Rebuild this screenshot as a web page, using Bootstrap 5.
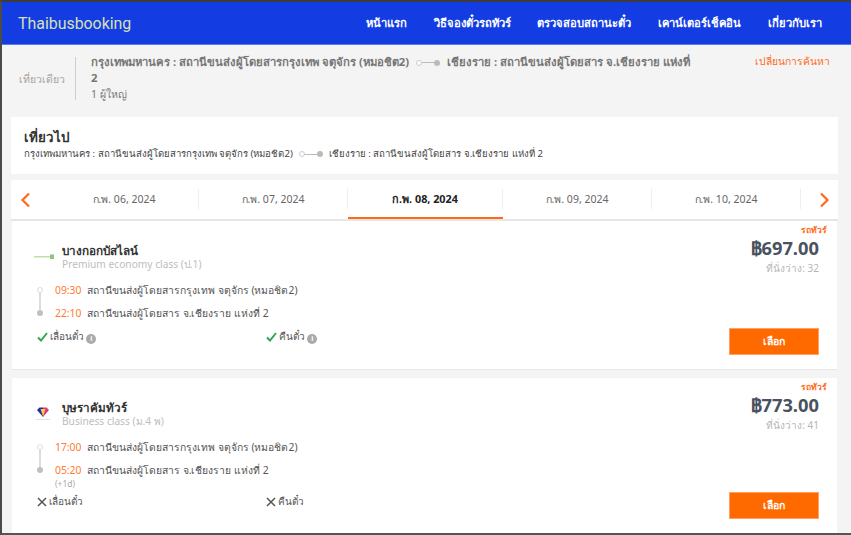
<!DOCTYPE html>
<html lang="th">
<head>
<meta charset="utf-8">
<title>Thaibusbooking</title>
<link href="https://cdn.jsdelivr.net/npm/bootstrap@5.3.0/dist/css/bootstrap.min.css" rel="stylesheet">
<style>
html,body{height:535px;overflow:hidden;}
body{background:#f4f4f4;font-family:"Noto Sans","Open Sans","Liberation Sans",sans-serif;font-size:10.5px;color:#555;}
.app-frame{height:535px;overflow:hidden;border-top:2px solid #3c3c3c;border-left:2px solid #4a4a4a;border-bottom:2px solid #555;background:#f4f4f4;}
.top-bar{height:43px;background:#133de2;padding:0 29px 0 16px;border-bottom:1px solid #5a7be8;}
.brand-name{font-family:"Roboto","Liberation Sans",sans-serif;font-size:15.9px;color:#d8e0b4;padding-top:1px;}
.top-link{font-size:11.2px;font-weight:700;color:#fff;text-decoration:none;}
.top-links{gap:26.8px;}
.sum-box{height:72px;padding:7px 17px 0 17px;}
.sum-kind{width:56px;color:#a9a39c;font-size:10.5px;height:43px;margin-top:6px;}
.sum-rule{width:1px;height:43px;background:#ccc;margin:5px 15px 0 0;flex:none;}
.sum-main{width:604px;line-height:16px;color:#777;font-size:11.3px;margin-top:2px;}
.sum-route{font-weight:700;}
.sum-count{font-size:10.5px;}
.sum-change{color:#ff6a1a;font-size:10.3px;text-decoration:none;margin-left:auto;margin-right:4px;margin-top:1px;line-height:16px;}
.go-box{background:#fff;margin:0 13px 0 9px;height:57px;padding:12px 13px;}
.go-title{font-size:13.4px;font-weight:700;color:#333;line-height:17px;}
.go-route{font-size:9.6px;color:#444;line-height:13px;margin-top:1px;}
.line-mark{display:inline-flex;align-items:center;vertical-align:middle;margin:0 7px;}
.go-route .line-mark{margin:0 6px;}
.dot-open{width:6px;height:6px;border:1px solid #ccc;border-radius:50%;background:#fff;flex:none;}
.dot-full{width:6px;height:6px;border-radius:50%;background:#bbb;flex:none;}
.dash-h{width:12px;height:1px;background:#bbb;}
.date-strip{background:#fff;margin:6px 13px 0 9px;height:41px;border-bottom:2px solid #e6e6e6;}
.arrow-prev{width:29px;flex:none;}
.arrow-next{width:27px;flex:none;}
.date-cell{width:149px;text-align:center;font-size:10.5px;color:#666;height:39px;padding-top:5px;}
.date-cell-wrap{height:20px;line-height:20px;border-right:1px solid #eee;margin-top:4px;}
.date-cell.is-on{width:155px;color:#222;font-weight:700;font-size:10.8px;border-bottom:2px solid #ff6a13;}
.trip-card{background:#fff;margin:0 14px 0 10px;border-bottom:1px solid #e6e6e6;position:relative;padding:0 18px 0 20px;}
.trip-one{height:149px;margin-bottom:8px;}
.trip-two{height:156px;}
.tour-tag{position:absolute;right:10px;top:3px;font-size:8.5px;font-weight:700;color:#ff6a1a;line-height:11px;}
.logo-cell{width:30px;flex:none;padding-left:2px;}
.logo-cell svg{display:block;}
.op-head{padding-top:22px;margin-bottom:11px;}
.op-name{font-size:11.7px;font-weight:700;color:#333;line-height:14px;}
.op-class{font-size:10.2px;color:#bdbdbd;line-height:14px;}
.price-col{padding-top:15px;}
.price-val{font-family:"Open Sans","Noto Sans",sans-serif;font-size:18.3px;font-weight:700;color:#49525e;line-height:24px;}
.seat-left{font-size:10px;color:#b5b5b5;line-height:13px;margin-top:2px;}
.time-row{line-height:16px;font-size:10.35px;color:#555;height:16px;}
.time-row+.time-row{margin-top:7px;}
.time-val{color:#ff7a33;width:32px;flex:none;}
.rail{width:6px;flex:none;margin:0 4px 0 5px;padding-top:5px;}
.rail-line{width:2px;height:17px;background:#ddd;}
.rail .dot-open{border:1.5px solid #ddd;}
.rail .dot-full{background:#bfbfbf;}
.day-plus{font-size:8.5px;color:#aaa;line-height:9px;padding-left:23px;margin-top:1px;}
.perk-row{margin:8px 0 0 5px;}
.perk-row-two{margin-top:6px;}
.perk{width:229px;font-size:10px;color:#555;line-height:14px;}
.perk svg{margin-right:-1px;}
.info-dot{display:inline-flex;width:10px;height:10px;border-radius:50%;background:#aaa;color:#fff;font-size:7px;font-weight:700;align-items:center;justify-content:center;vertical-align:-1px;}
.pick-btn{background:#ff6a00;border:1px solid #ffa165;color:#fff;border-radius:0;width:90px;height:27px;font-size:10.5px;font-weight:700;padding:0;line-height:25px;margin-bottom:14px;}
.pick-btn:hover{background:#ff6a00;color:#fff;}
</style>
</head>
<body>
<div class="app-frame d-flex flex-column">
  <nav class="top-bar d-flex align-items-center justify-content-between flex-shrink-0">
    <span class="brand-name">Thaibusbooking</span>
    <div class="top-links d-flex align-items-center">
      <a class="top-link" href="#">หน้าแรก</a>
      <a class="top-link" href="#">วิธีจองตั๋วรถทัวร์</a>
      <a class="top-link" href="#">ตรวจสอบสถานะตั๋ว</a>
      <a class="top-link" href="#">เคาน์เตอร์เช็คอิน</a>
      <a class="top-link" href="#">เกี่ยวกับเรา</a>
    </div>
  </nav>

  <section class="sum-box d-flex flex-shrink-0">
    <div class="sum-kind d-flex align-items-center">เที่ยวเดียว</div>
    <div class="sum-rule"></div>
    <div class="sum-main">
      <div class="sum-route">กรุงเทพมหานคร : สถานีขนส่งผู้โดยสารกรุงเทพ จตุจักร (หมอชิต2)<span class="line-mark"><span class="dot-open"></span><span class="dash-h"></span><span class="dot-full"></span></span>เชียงราย : สถานีขนส่งผู้โดยสาร จ.เชียงราย แห่งที่ 2</div>
      <div class="sum-count">1 ผู้ใหญ่</div>
    </div>
    <a class="sum-change" href="#">เปลี่ยนการค้นหา</a>
  </section>

  <section class="go-box flex-shrink-0">
    <div class="go-title">เที่ยวไป</div>
    <div class="go-route">กรุงเทพมหานคร : สถานีขนส่งผู้โดยสารกรุงเทพ จตุจักร (หมอชิต2)<span class="line-mark"><span class="dot-open"></span><span class="dash-h"></span><span class="dot-full"></span></span>เชียงราย : สถานีขนส่งผู้โดยสาร จ.เชียงราย แห่งที่ 2</div>
  </section>

  <section class="date-strip d-flex flex-shrink-0">
    <div class="arrow-prev d-flex align-items-center justify-content-center">
      <svg width="11" height="16" viewBox="0 0 11 16"><path d="M9 1.500 2.500 8 9 14.500" fill="none" stroke="#ff6a1a" stroke-width="2.200"/></svg>
    </div>
    <div class="d-flex flex-grow-1 justify-content-center">
      <div class="date-cell"><div class="date-cell-wrap">ก.พ. 06, 2024</div></div>
      <div class="date-cell"><div class="date-cell-wrap">ก.พ. 07, 2024</div></div>
      <div class="date-cell is-on"><div class="date-cell-wrap">ก.พ. 08, 2024</div></div>
      <div class="date-cell"><div class="date-cell-wrap">ก.พ. 09, 2024</div></div>
      <div class="date-cell"><div class="date-cell-wrap">ก.พ. 10, 2024</div></div>
    </div>
    <div class="arrow-next d-flex align-items-center justify-content-center">
      <svg width="11" height="16" viewBox="0 0 11 16"><path d="M2 1.500 8.500 8 2 14.500" fill="none" stroke="#ff6a1a" stroke-width="2.200"/></svg>
    </div>
  </section>

  <article class="trip-card trip-one d-flex flex-shrink-0">
    <span class="tour-tag">รถทัวร์</span>
    <div class="flex-grow-1">
      <div class="op-head d-flex align-items-center">
        <div class="logo-cell">
          <svg width="21" height="8" viewBox="0 0 21 8"><rect x="0" y="3" width="16" height="1.500" fill="#c3dfa8"/><rect x="16" y="1.500" width="4" height="4.500" fill="#8cc57f"/></svg>
        </div>
        <div>
          <div class="op-name">บางกอกบัสไลน์</div>
          <div class="op-class">Premium economy class (ป.1)</div>
        </div>
      </div>
      <div class="d-flex">
        <div class="rail d-flex flex-column align-items-center">
          <span class="dot-open"></span><span class="rail-line"></span><span class="dot-full"></span>
        </div>
        <div class="ps-2">
          <div class="time-row d-flex"><span class="time-val">09:30</span><span>สถานีขนส่งผู้โดยสารกรุงเทพ จตุจักร (หมอชิต2)</span></div>
          <div class="time-row d-flex"><span class="time-val">22:10</span><span>สถานีขนส่งผู้โดยสาร จ.เชียงราย แห่งที่ 2</span></div>
        </div>
      </div>
      <div class="perk-row d-flex">
        <div class="perk"><svg width="11" height="10" viewBox="0 0 11 10"><path d="M1 5.500 4 8.500 10 1" fill="none" stroke="#2ea84f" stroke-width="2"/></svg> เลื่อนตั๋ว <span class="info-dot">i</span></div>
        <div class="perk"><svg width="11" height="10" viewBox="0 0 11 10"><path d="M1 5.500 4 8.500 10 1" fill="none" stroke="#2ea84f" stroke-width="2"/></svg> คืนตั๋ว <span class="info-dot">i</span></div>
      </div>
    </div>
    <div class="price-col d-flex flex-column align-items-end">
      <div class="price-val">฿697.00</div>
      <div class="seat-left">ที่นั่งว่าง: 32</div>
      <button class="btn pick-btn mt-auto" type="button">เลือก</button>
    </div>
  </article>

  <article class="trip-card trip-two d-flex flex-shrink-0">
    <span class="tour-tag">รถทัวร์</span>
    <div class="flex-grow-1">
      <div class="op-head d-flex align-items-center">
        <div class="logo-cell">
          <svg width="18" height="16" viewBox="0 0 18 16"><path d="M3 4 5.500 1.500H9V11z" fill="#2a2a9c"/><path d="M15 4 12.500 1.500H9V11z" fill="#e0357c"/><path d="M6.500 3h5L9 10.500z" fill="#f7cf3c"/><rect x="2" y="13" width="14" height="1" fill="#e8e2d8"/></svg>
        </div>
        <div>
          <div class="op-name">บุษราคัมทัวร์</div>
          <div class="op-class">Business class (ม.4 พ)</div>
        </div>
      </div>
      <div class="d-flex">
        <div class="rail d-flex flex-column align-items-center">
          <span class="dot-open"></span><span class="rail-line"></span><span class="dot-full"></span>
        </div>
        <div class="ps-2">
          <div class="time-row d-flex"><span class="time-val">17:00</span><span>สถานีขนส่งผู้โดยสารกรุงเทพ จตุจักร (หมอชิต2)</span></div>
          <div class="time-row d-flex"><span class="time-val">05:20</span><span>สถานีขนส่งผู้โดยสาร จ.เชียงราย แห่งที่ 2</span></div>
        </div>
      </div>
      <div class="day-plus">(+1d)</div>
      <div class="perk-row perk-row-two d-flex">
        <div class="perk"><svg width="10" height="10" viewBox="0 0 10 10"><path d="M1 1 9 9M9 1 1 9" fill="none" stroke="#555" stroke-width="1.500"/></svg> เลื่อนตั๋ว</div>
        <div class="perk"><svg width="10" height="10" viewBox="0 0 10 10"><path d="M1 1 9 9M9 1 1 9" fill="none" stroke="#555" stroke-width="1.500"/></svg> คืนตั๋ว</div>
      </div>
    </div>
    <div class="price-col d-flex flex-column align-items-end">
      <div class="price-val">฿773.00</div>
      <div class="seat-left">ที่นั่งว่าง: 41</div>
      <button class="btn pick-btn mt-auto" type="button">เลือก</button>
    </div>
  </article>
</div>
<script src="https://cdn.jsdelivr.net/npm/bootstrap@5.3.0/dist/js/bootstrap.bundle.min.js"></script>
</body>
</html>
